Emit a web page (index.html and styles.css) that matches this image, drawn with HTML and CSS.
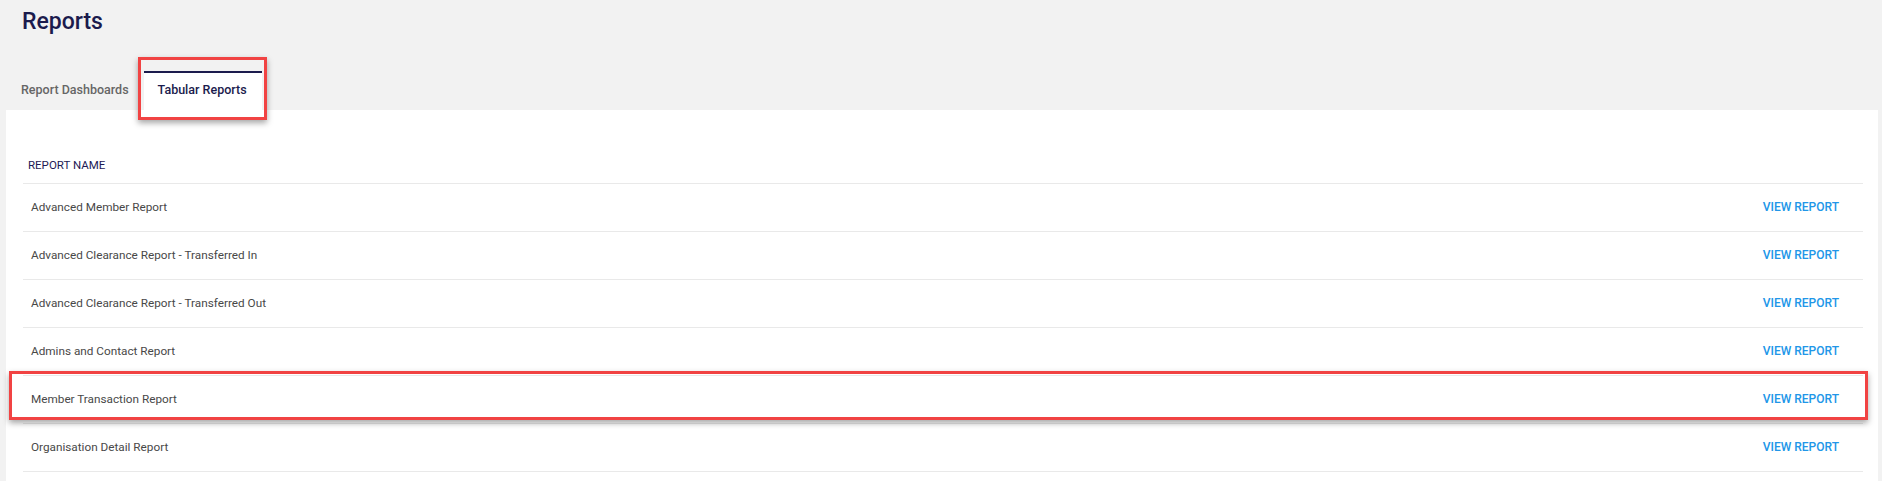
FILE: index.html
```html
<!DOCTYPE html>
<html lang="en">
<head>
<meta charset="utf-8">
<title>Reports</title>
<link rel="stylesheet" href="styles.css">
</head>
<body>
<div class="page">
  <h1 class="title">Reports</h1>
  <div class="tabs">
    <div class="tab">Report Dashboards</div>
    <div class="tab active annotated">Tabular Reports</div>
  </div>
  <div class="panel">
    <div class="table">
      <div class="thead">REPORT NAME</div>
      <div class="row"><span class="name">Advanced Member Report</span><a class="link">VIEW REPORT</a></div>
      <div class="row"><span class="name">Advanced Clearance Report - Transferred In</span><a class="link">VIEW REPORT</a></div>
      <div class="row"><span class="name">Advanced Clearance Report - Transferred Out</span><a class="link">VIEW REPORT</a></div>
      <div class="row"><span class="name">Admins and Contact Report</span><a class="link">VIEW REPORT</a></div>
      <div class="row annotated-row"><span class="name">Member Transaction Report</span><a class="link">VIEW REPORT</a></div>
      <div class="row"><span class="name">Organisation Detail Report</span><a class="link">VIEW REPORT</a></div>
    </div>
  </div>
</div>
</body>
</html>
```
FILE: styles.css
```css
* { box-sizing: border-box; }
html, body { margin: 0; padding: 0; }
body {
  background: #f2f2f2;
  font-family: Roboto, "Liberation Sans", Arial, sans-serif;
  overflow: hidden;
}
.page {
  display: flex;
  flex-direction: column;
}
.title {
  margin: 0;
  padding: 8px 0 0 22px;
  font-size: 23px;
  line-height: 28px;
  font-weight: 500;
  color: #1b1b4d;
}
.tabs {
  display: flex;
  margin: 35px 0 0 7px;
}
.tab {
  height: 39px;
  border-top: 2px solid transparent;
  padding: 0 14px 3px 14px;
  font-size: 12.5px;
  line-height: 34px;
  font-weight: 500;
  color: #666;
}
.tab.active {
  margin-left: 1px;
  padding-right: 15px;
  background: #fff;
  border-top-color: #1b1b4d;
  color: #1b1b4d;
}
.annotated { position: relative; }
.annotated::after {
  content: "";
  position: absolute;
  top: -16px;
  bottom: -10px;
  left: -6px;
  right: -5px;
  border: 3px solid #f14343;
  box-shadow: 0 3px 6px rgba(0,0,0,0.35);
  pointer-events: none;
}
.panel {
  margin: 0 4px 0 6px;
  background: #fff;
  padding: 30px 15px 40px 17px;
  min-height: 400px;
}
.table {
  display: flex;
  flex-direction: column;
}
.thead {
  height: 44px;
  padding: 15px 0 8px 5px;
  font-size: 11.5px;
  line-height: 20px;
  color: #1e1a55;
  border-bottom: 1px solid #e9e9e9;
}
.row {
  height: 48px;
  display: flex;
  align-items: center;
  justify-content: space-between;
  padding: 0 24px 1px 8px;
  border-bottom: 1px solid #e9e9e9;
  font-size: 11.75px;
}
.name { color: #484848; }
.link {
  color: #2196e8;
  font-weight: 500;
  font-size: 12px;
}
.annotated-row { position: relative; }
.annotated-row::after {
  content: "";
  position: absolute;
  top: -5px;
  bottom: 3px;
  left: -14px;
  right: -5px;
  border: 3px solid #f14343;
  box-shadow: 0 3px 6px rgba(0,0,0,0.35);
  pointer-events: none;
}
```
